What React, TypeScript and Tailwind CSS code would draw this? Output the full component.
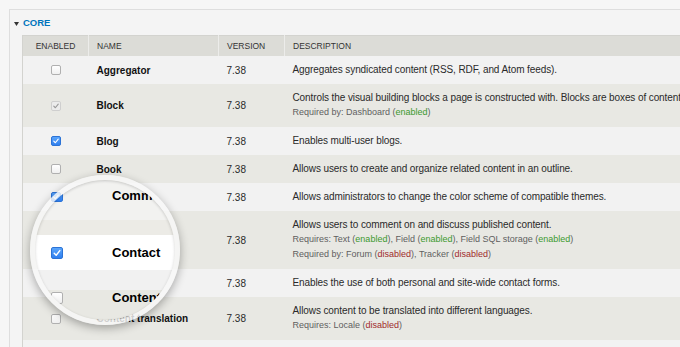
import React from "react";

type Seg = { t: string; c?: "en" | "dis" };
type Row = {
  name: string;
  state: "off" | "on" | "locked";
  desc: string;
  subs: Seg[][];
};

const rows: Row[] = [
  { name: "Aggregator", state: "off", desc: "Aggregates syndicated content (RSS, RDF, and Atom feeds).", subs: [] },
  {
    name: "Block",
    state: "locked",
    desc: "Controls the visual building blocks a page is constructed with. Blocks are boxes of content rendered into an area, or region, of a web page.",
    subs: [[{ t: "Required by: Dashboard (" }, { t: "enabled", c: "en" }, { t: ")" }]],
  },
  { name: "Blog", state: "on", desc: "Enables multi-user blogs.", subs: [] },
  { name: "Book", state: "off", desc: "Allows users to create and organize related content in an outline.", subs: [] },
  { name: "Color", state: "on", desc: "Allows administrators to change the color scheme of compatible themes.", subs: [] },
  {
    name: "Comment",
    state: "on",
    desc: "Allows users to comment on and discuss published content.",
    subs: [
      [
        { t: "Requires: Text (" },
        { t: "enabled", c: "en" },
        { t: "), Field (" },
        { t: "enabled", c: "en" },
        { t: "), Field SQL storage (" },
        { t: "enabled", c: "en" },
        { t: ")" },
      ],
      [
        { t: "Required by: Forum (" },
        { t: "disabled", c: "dis" },
        { t: "), Tracker (" },
        { t: "disabled", c: "dis" },
        { t: ")" },
      ],
    ],
  },
  { name: "Contact", state: "on", desc: "Enables the use of both personal and site-wide contact forms.", subs: [] },
  {
    name: "Content translation",
    state: "off",
    desc: "Allows content to be translated into different languages.",
    subs: [[{ t: "Requires: Locale (" }, { t: "disabled", c: "dis" }, { t: ")" }]],
  },
  { name: "Contextual links", state: "on", desc: "Provides contextual links to perform actions related to elements on a page.", subs: [] },
];

function Box({ state, size = 10 }: { state: "off" | "on" | "locked"; size?: number }) {
  const cls =
    state === "on"
      ? "bg-gradient-to-b from-[#5aa5fb] to-[#2f7fef] border-[#2c73d6]"
      : state === "locked"
      ? "bg-[#ececec] border-[#cfcfcf]"
      : "bg-gradient-to-b from-white to-[#f0f0f0] border-[#b0b0b0]";
  return (
    <span
      className={`inline-flex shrink-0 items-center justify-center rounded-[2px] border align-middle ${cls}`}
      style={{ width: size, height: size }}
    >
      {state !== "off" && (
        <svg viewBox="0 0 10 10" width={size - 2} height={size - 2}>
          <path
            d="M2.2 5.2 L4.2 7.2 L7.8 2.6"
            fill="none"
            stroke={state === "on" ? "#ffffff" : "#9a9a9a"}
            strokeWidth="1.4"
            strokeLinecap="round"
            strokeLinejoin="round"
          />
        </svg>
      )}
    </span>
  );
}

function LensRow({ state, label }: { state: "off" | "on"; label: string }) {
  return (
    <div className="flex items-center gap-[49px] pl-[16px] h-[16px]">
      <Box state={state} size={12} />
      <span className="text-[13px] leading-[16px] font-bold text-black whitespace-nowrap">{label}</span>
    </div>
  );
}

export default function App() {
  return (
    <div
      className="relative w-[680px] h-[347px] overflow-hidden bg-[#f6f6f6] pl-[9px] pt-[9px] text-[#2a2a2a]"
      style={{ fontFamily: '"Liberation Sans", Arial, sans-serif' }}
    >
      <div className="w-[720px] h-[400px] border border-[#dedede] bg-[#f4f4f4] pl-[12px] pt-[7px]">
        <div className="flex items-center h-[12px] -ml-[8px] gap-[4px]">
          <svg width="5" height="4" viewBox="0 0 5 4" className="mt-[1px]">
            <path d="M0 0 H5 L2.5 4 Z" fill="#333" />
          </svg>
          <span className="text-[9.5px] font-bold text-[#0074bd] leading-[12px]">CORE</span>
        </div>
        <table className="mt-[6px] w-[700px] table-fixed border-collapse border-l border-t border-[#d3d3cf]">
          <colgroup>
            <col className="w-[66px]" />
            <col className="w-[130px]" />
            <col className="w-[66px]" />
            <col />
          </colgroup>
          <thead>
            <tr className="bg-[#dcdcd7] text-[8.5px] leading-[14px] text-[#333]">
              <th className="py-[3px] font-normal text-center">ENABLED</th>
              <th className="py-[3px] pl-[8px] font-normal text-left border-l border-[#ececea]">NAME</th>
              <th className="py-[3px] pl-[8px] font-normal text-left border-l border-[#ececea]">VERSION</th>
              <th className="py-[3px] pl-[8px] font-normal text-left border-l border-[#ececea]">DESCRIPTION</th>
            </tr>
          </thead>
          <tbody>
            {rows.map((r, i) => (
              <tr key={r.name} className={i % 2 === 0 ? "bg-[#f2f2f2]" : "bg-[#e8e8e3]"}>
                <td className="text-center align-middle leading-[10px]">
                  <Box state={r.state} />
                </td>
                <td className="pl-[8px] align-middle text-[10px] font-bold text-[#111] whitespace-nowrap">{r.name}</td>
                <td className="pl-[8px] align-middle text-[10px]">7.38</td>
                <td className="pl-[8px] py-[7px] align-middle whitespace-nowrap overflow-hidden">
                  <div className="text-[10px] leading-[14px] tracking-[-0.1px]">{r.desc}</div>
                  {r.subs.map((s, j) => (
                    <div key={j} className="text-[9px] leading-[15px] text-[#5f5f5f]">
                      {s.map((seg, k) => (
                        <span
                          key={k}
                          className={
                            seg.c === "en" ? "text-[#3c9a2e]" : seg.c === "dis" ? "text-[#a02c2c]" : undefined
                          }
                        >
                          {seg.t}
                        </span>
                      ))}
                    </div>
                  ))}
                </td>
              </tr>
            ))}
          </tbody>
        </table>
      </div>

      {/* magnifier lens over the table */}
      <div className="absolute left-[30px] top-[175px] w-[150px] h-[150px] rounded-full border-[5px] border-[rgba(248,248,248,0.82)] shadow-[0_3px_10px_rgba(0,0,0,0.32)]">
        <div className="relative w-full h-full rounded-full overflow-hidden flex flex-col">
          <div className="h-[40px] pt-[8px] bg-[#f2f2f0]">
            <LensRow state="on" label="Comment" />
          </div>
          <div className="h-[15px] bg-[#ecebe6]" />
          <div className="h-[35px] flex flex-col justify-center bg-white">
            <LensRow state="on" label="Contact" />
          </div>
          <div className="h-[20px] bg-[#f1f1f1]" />
          <div className="flex-1 bg-[#e8e8e3]">
            <LensRow state="off" label="Content translation" />
          </div>
          <div className="absolute inset-0 rounded-full shadow-[inset_0_1px_3px_rgba(0,0,0,0.18)]" />
        </div>
      </div>
    </div>
  );
}
